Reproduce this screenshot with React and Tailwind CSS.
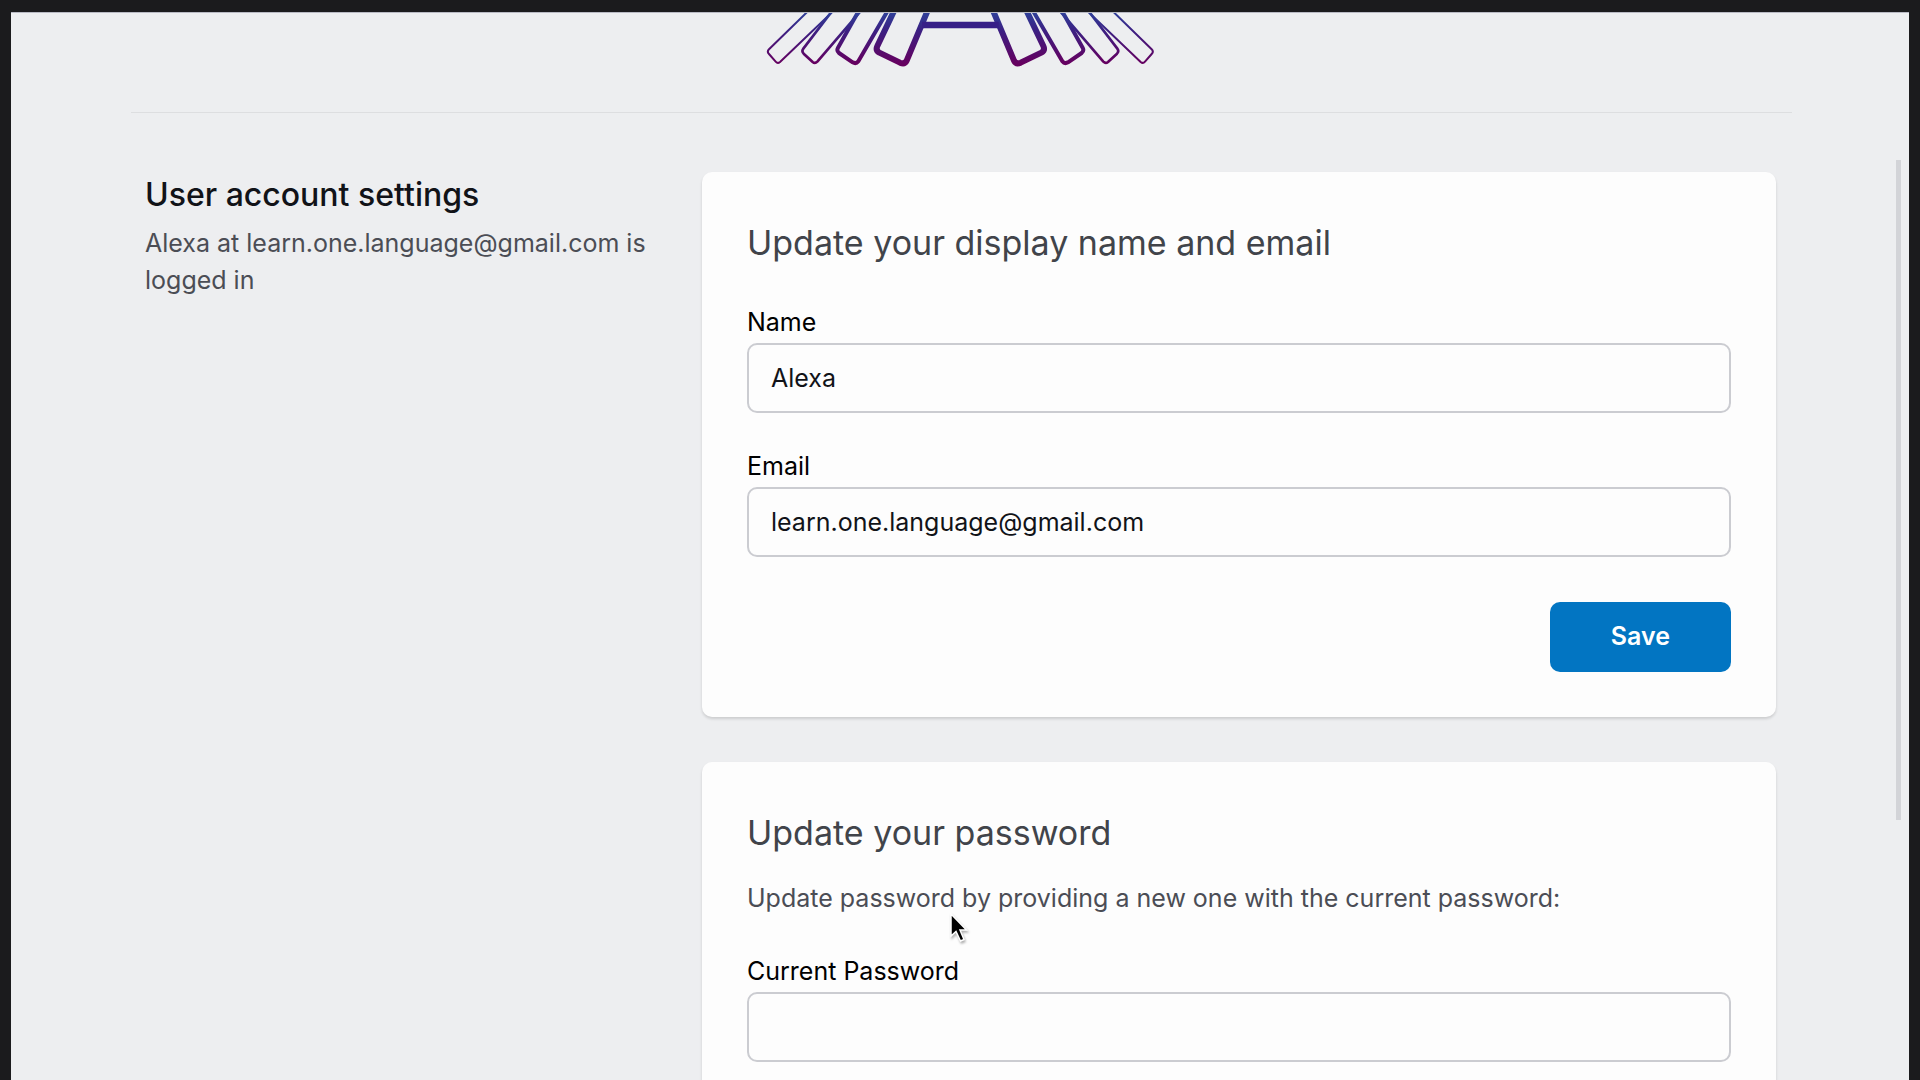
const LEG_PATHS = [
  { d: "M192 12 L55 146 Q48 153 55 160 L75 183 Q81 190 88 184 L272 8", w: 6 },
  { d: "M262 8 L158 144 Q152 152 159 159 L186 184 Q193 190 200 183 L350 8", w: 8 },
  { d: "M337 8 L262 141 Q257 150 265 157 L306 185 Q316 191 323 182 L424 8", w: 12 },
  { d: "M441 8 L380 136 Q374 149 386 156 L448 186 Q462 192 468 180 L540 8", w: 18 },
];

function Legs() {
  return LEG_PATHS.map((leg) => <path key={leg.w} d={leg.d} strokeWidth={leg.w} />);
}

function Logo() {
  return (
    <svg className="h-[68px] w-[420px]" viewBox="4 37 1260 204" fill="none" role="img" aria-label="Logo">
      <defs>
        <linearGradient id="ink" gradientUnits="userSpaceOnUse" x1="0" y1="20" x2="0" y2="190">
          <stop offset="0" stopColor="#2b4a9f" />
          <stop offset="0.4" stopColor="#3b2083" />
          <stop offset="1" stopColor="#66005f" />
        </linearGradient>
      </defs>
      <g stroke="url(#ink)" strokeLinejoin="round">
        <Legs />
        <g transform="translate(1258 0) scale(-1 1)">
          <Legs />
        </g>
      </g>
      <path d="M514 73 H744" stroke="#371f87" strokeWidth="20" />
    </svg>
  );
}

function Field({ id, label, type = "text", value }) {
  return (
    <div>
      <label htmlFor={id} className="mb-[2px] block text-[25px] leading-[37px] text-black">
        {label}
      </label>
      <input
        id={id}
        type={type}
        defaultValue={value}
        className="block h-[70px] w-full rounded-[10px] border-2 border-[#cbccd1] bg-transparent px-[22px] text-[25px] text-[#111318] outline-none"
      />
    </div>
  );
}

function Card({ title, children }) {
  return (
    <section className="rounded-[10px] bg-[#fdfdfd] px-[45px] pt-[46px] pb-[45px] shadow-[0_2px_3px_rgba(0,0,0,0.14)]">
      <h2 className="text-[34px] leading-[50px] text-[#41444a]">{title}</h2>
      {children}
    </section>
  );
}

export default function App() {
  return (
    <div className="flex h-screen flex-col overflow-hidden bg-[#1b1b1d] px-[11px] pt-3 font-['Inter',sans-serif]">
      <main className="relative flex-1 overflow-hidden border-t border-[#b9bac4] bg-[#edeef0] pr-[117px] pl-[120px]">
        <header className="flex h-[100px] justify-center border-b border-[#dddee0]">
          <Logo />
        </header>
        <div className="grid grid-cols-3 gap-10 pt-[59px] pr-[16px] pl-[14px]">
          <div>
            <h1 className="text-[32px] leading-[45px] font-medium text-[#111318]">User account settings</h1>
            <p className="mt-[8px] text-[25px] leading-[37px] text-[#4b4d55]">
              Alexa at learn.one.language@gmail.com is logged in
            </p>
          </div>
          <div className="col-span-2 flex flex-col gap-[45px]">
            <Card title="Update your display name and email">
              <form className="mt-[36px] flex flex-col gap-[35px]">
                <Field id="name" label="Name" value="Alexa" />
                <Field id="email" label="Email" type="email" value="learn.one.language@gmail.com" />
                <button
                  type="button"
                  className="mt-[10px] h-[70px] self-end rounded-[10px] bg-[#0275c2] px-[61px] text-[25px] font-semibold text-white"
                >
                  Save
                </button>
              </form>
            </Card>
            <Card title="Update your password">
              <p className="mt-[22px] text-[25px] leading-[37px] text-[#4b4d55]">
                Update password by providing a new one with the current password:
              </p>
              <form className="mt-[36px]">
                <Field id="current-password" label="Current Password" type="password" />
              </form>
            </Card>
          </div>
        </div>
        <div className="absolute top-[147px] right-[8px] h-[660px] w-[5px] bg-[#d3d4d8]" />
        <svg
          className="absolute top-[899px] left-[938px] h-[34px] w-[22px] drop-shadow-[1px_2px_1px_rgba(0,0,0,0.3)]"
          viewBox="0 0 22 34"
          aria-hidden="true"
        >
          <path
            d="M2 2 V24 L7 19.500 L11.500 29 L15 27.500 L11 18 H17.500 Z"
            fill="#000"
            stroke="#fff"
            strokeWidth="1.500"
          />
        </svg>
      </main>
    </div>
  );
}
